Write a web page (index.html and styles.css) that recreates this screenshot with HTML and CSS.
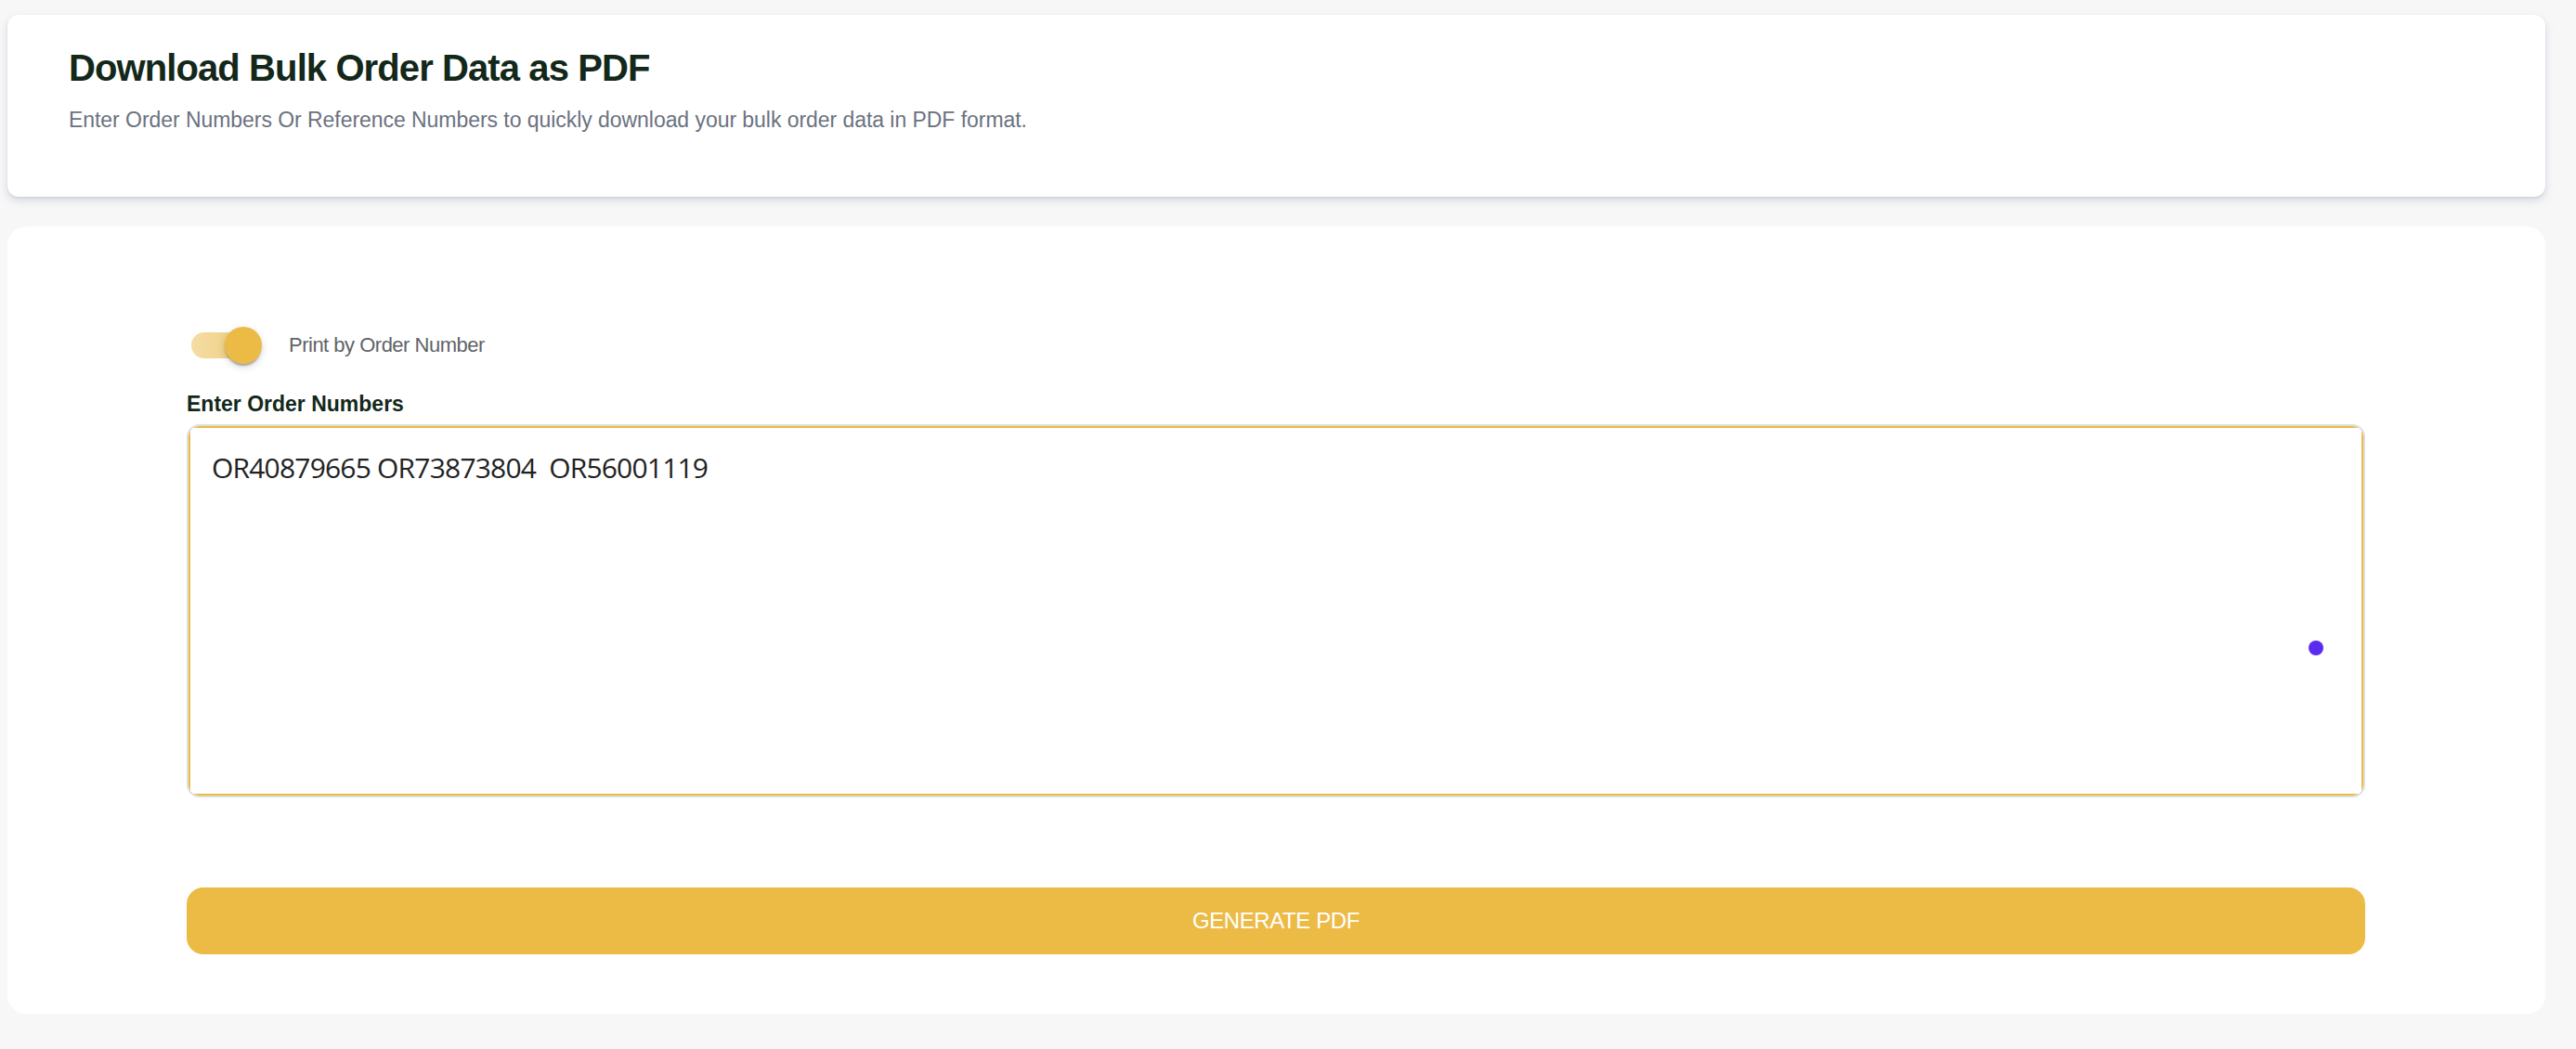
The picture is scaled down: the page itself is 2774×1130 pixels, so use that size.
FILE: index.html
```html
<!DOCTYPE html>
<html lang="en">
<head>
<meta charset="utf-8">
<title>Download Bulk Order Data as PDF</title>
<link rel="stylesheet" href="styles.css">
</head>
<body>
<div class="page">
  <section class="header-card">
    <h1 class="title">Download Bulk Order Data as PDF</h1>
    <p class="subtitle">Enter Order Numbers Or Reference Numbers to quickly download your bulk order data in PDF format.</p>
  </section>

  <section class="form-card">
    <div class="toggle-row">
      <span class="switch" role="switch" aria-checked="true">
        <span class="switch-track"></span>
        <span class="switch-thumb"></span>
      </span>
      <span class="toggle-label">Print by Order Number</span>
    </div>

    <label class="field-label" for="orders">Enter Order Numbers</label>
    <div class="input-wrap">
      <textarea id="orders" class="orders-input" spellcheck="false">OR40879665 OR73873804  OR56001119</textarea>
      <span class="assist-dot"></span>
    </div>

    <button class="generate-btn" type="button">GENERATE PDF</button>
  </section>
</div>
</body>
</html>
```

FILE: styles.css
```css
* {
  box-sizing: border-box;
}

html, body {
  margin: 0;
  padding: 0;
  background: #f7f7f7;
  font-family: "Liberation Sans", Arial, sans-serif;
}

.page {
  display: flex;
  flex-direction: column;
  gap: 32px;
  padding: 16px 33px 0 8px;
}

.header-card {
  background: #ffffff;
  border-radius: 12px;
  box-shadow: 0 4px 8px rgba(148, 160, 184, 0.35), 0 1px 2px rgba(148, 160, 184, 0.25);
  padding: 33px 66px 67px;
}

.title {
  margin: 0;
  font-size: 40px;
  line-height: 48px;
  font-weight: 700;
  letter-spacing: -0.9px;
  color: #13281a;
}

.subtitle {
  margin: 16px 0 0;
  font-size: 23px;
  line-height: 32px;
  letter-spacing: -0.05px;
  color: #6b7280;
}

.form-card {
  background: #ffffff;
  border-radius: 20px;
  padding: 90px 194px 64px 193px;
  display: flex;
  flex-direction: column;
}

.toggle-row {
  height: 76px;
  display: flex;
  align-items: center;
}

.switch {
  position: relative;
  width: 76px;
  height: 40px;
  margin-left: 5px;
  flex: none;
}

.switch-track {
  position: absolute;
  left: 0;
  top: 6px;
  width: 68px;
  height: 28px;
  border-radius: 14px;
  background: linear-gradient(to right, #f5dda4, #eecb78);
}

.switch-thumb {
  position: absolute;
  left: 36px;
  top: 0;
  width: 40px;
  height: 40px;
  border-radius: 50%;
  background: #ecbb46;
  box-shadow: 0 4px 2px -2px rgba(0, 0, 0, 0.18), 0 2px 2px rgba(0, 0, 0, 0.12), 0 3px 8px rgba(0, 0, 0, 0.16);
}

.toggle-label {
  margin-left: 29px;
  font-size: 22px;
  letter-spacing: -0.5px;
  color: #5f6368;
}

.field-label {
  display: block;
  margin-top: 11px;
  font-size: 23px;
  line-height: 28px;
  font-weight: 700;
  color: #13281a;
}

.input-wrap {
  position: relative;
  margin-top: 8px;
  height: 402px;
  border: 2px solid #dedede;
  border-radius: 14px;
  overflow: hidden;
}

.orders-input {
  display: block;
  width: 100%;
  height: 100%;
  margin: 0;
  border: 2px solid #ecbb46;
  border-radius: 0;
  padding: 20px 23px;
  font-family: "Open Sans", "Noto Sans", sans-serif;
  font-size: 30px;
  line-height: 45px;
  letter-spacing: -0.8px;
  color: #222222;
  background: #ffffff;
  resize: none;
  outline: none;
  overflow: hidden;
}

.assist-dot {
  position: absolute;
  right: 43px;
  top: 231px;
  width: 16px;
  height: 16px;
  border-radius: 50%;
  background: #5a2cf0;
}

.generate-btn {
  margin-top: 97px;
  height: 72px;
  width: 100%;
  border: none;
  border-radius: 18px;
  background: #ecbb46;
  color: #ffffff;
  font-family: "Liberation Sans", Arial, sans-serif;
  font-size: 24px;
  letter-spacing: -0.4px;
  cursor: pointer;
}
```
